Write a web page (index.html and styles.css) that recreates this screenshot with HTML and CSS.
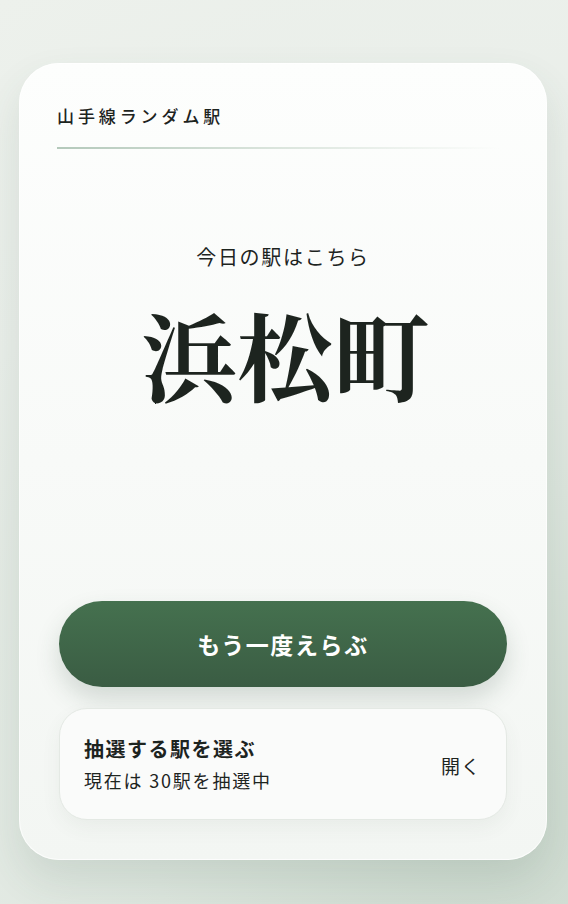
FILE: index.html
```html
<!DOCTYPE html>
<html lang="ja">
<head>
    <meta charset="UTF-8">
    <title>山手線ランダム駅</title>
    <link rel="stylesheet" href="styles.css">
</head>
<body>
<div class="card">
    <header class="head">
        <h1 class="title">山手線ランダム駅</h1>
    </header>
    <main class="result">
        <p class="lead">今日の駅はこちら</p>
        <p class="station">浜松町</p>
    </main>
    <div class="actions">
        <button class="again">もう一度えらぶ</button>
        <div class="picker">
            <div class="picker-text">
                <div class="picker-title">抽選する駅を選ぶ</div>
                <div class="picker-sub">現在は 30駅を抽選中</div>
            </div>
            <span class="picker-open">開く</span>
        </div>
    </div>
</div>
</body>
</html>
```

FILE: styles.css
```css
* {
    margin: 0;
    padding: 0;
    box-sizing: border-box;
}

html, body {
    height: 100%;
}

body {
    font-family: "Noto Sans CJK JP", "Noto Sans", sans-serif;
    color: #1d241f;
    background: radial-gradient(circle at 85% 90%, #cbd8cd 0, #dce5dd 35%, #e9eee9 70%, #edf1ec 100%);
    padding: 63px 21px 0 19px;
}

.card {
    height: 797px;
    border-radius: 40px;
    background: linear-gradient(180deg, #fdfefd 0%, #f8faf8 50%, #f3f6f3 100%);
    box-shadow: 0 20px 40px rgba(60, 90, 70, .12), 0 0 0 1px rgba(255, 255, 255, .7) inset;
    padding: 0 40px 40px 38px;
    display: flex;
    flex-direction: column;
}

.head {
    padding-top: 40px;
    padding-bottom: 20px;
    position: relative;
    margin-right: 8px;
}

.head::after {
    content: "";
    position: absolute;
    left: 0;
    right: 0;
    bottom: 0;
    height: 2px;
    background: linear-gradient(90deg, #b4c9bb 0%, #dbe5dd 50%, rgba(240, 244, 240, 0) 100%);
}

.title {
    font-size: 17px;
    font-weight: 500;
    letter-spacing: 3.9px;
    line-height: 26px;
}

.result {
    text-align: center;
    padding-top: 93px;
}

.lead {
    font-size: 20px;
    letter-spacing: 1.7px;
    line-height: 30px;
    padding-left: 2px;
}

.station {
    font-family: "Noto Serif CJK JP", "Noto Sans CJK JP", serif;
    font-weight: 700;
    font-size: 96px;
    line-height: 120px;
    margin-top: 21px;
    padding-left: 6px;
}

.actions {
    margin-top: auto;
    padding-left: 2px;
    display: flex;
    flex-direction: column;
    gap: 21px;
}

.again {
    height: 86px;
    border: none;
    border-radius: 43px;
    background: linear-gradient(180deg, #45714f 0%, #3a5c43 100%);
    color: #fff;
    font-family: inherit;
    font-size: 23px;
    font-weight: 700;
    letter-spacing: 1.6px;
    box-shadow: 0 12px 24px rgba(50, 80, 60, .18);
    cursor: pointer;
}

.picker {
    height: 112px;
    border-radius: 28px;
    border: 1px solid #e4e9e4;
    background: #fafbfa;
    box-shadow: 0 8px 20px rgba(60, 90, 70, .06);
    padding: 0 25px 0 24px;
    display: flex;
    align-items: center;
    justify-content: space-between;
}

.picker-title {
    font-size: 20px;
    font-weight: 700;
    letter-spacing: 1.5px;
    line-height: 28px;
}

.picker-sub {
    font-size: 18px;
    line-height: 26px;
    margin-top: 4px;
    letter-spacing: 1.8px;
}

.picker-open {
    font-size: 19px;
    letter-spacing: 1px;
    margin-top: 2px;
}
```
